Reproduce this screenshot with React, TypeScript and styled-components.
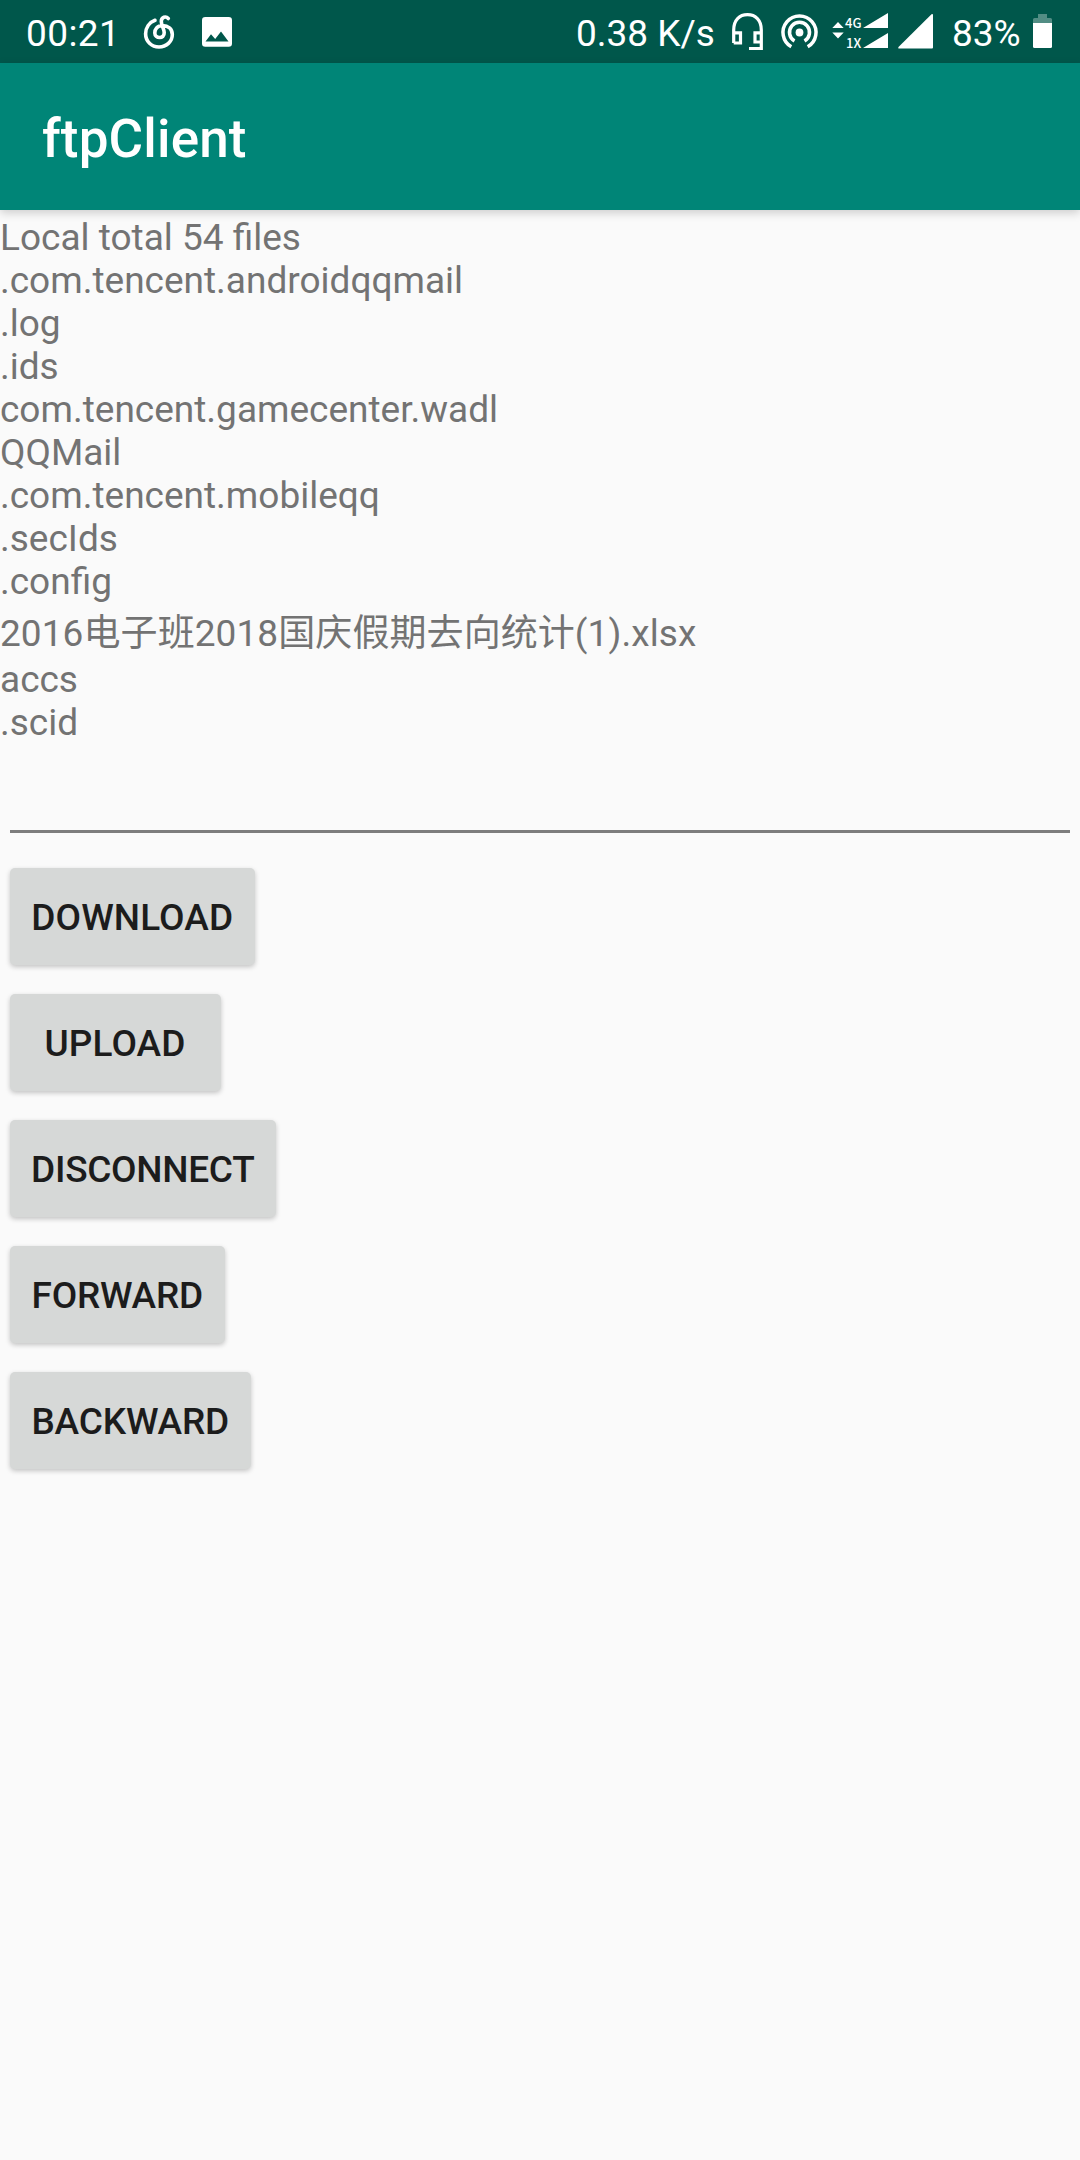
import React from 'react';
import styled, { createGlobalStyle } from 'styled-components';

const Global = createGlobalStyle`
  * { box-sizing: border-box; }
  body { margin: 0; background: #fafafa; font-family: Roboto, "Noto Sans CJK SC", sans-serif; }
`;

const Screen = styled.main`
  width: 1080px;
  min-height: 2160px;
  display: flex;
  flex-direction: column;
  background: #fafafa;
`;

const StatusBar = styled.header`
  height: 63px;
  display: flex;
  justify-content: space-between;
  padding: 0 28px 0 26px;
  background: #00574b;
  color: #fff;
`;

const StatusGroup = styled.div`
  display: flex;
  align-items: flex-start;
`;

const StatusText = styled.span<{ $width: number; $gap?: number; $spacing?: number }>`
  flex: none;
  width: ${(p) => p.$width}px;
  margin-left: ${(p) => p.$gap ?? 0}px;
  padding-top: 12px;
  font-size: 37px;
  line-height: 43px;
  letter-spacing: ${(p) => p.$spacing ?? 0}px;
  white-space: nowrap;
`;

const Glyph = styled.svg<{ $gap: number }>`
  display: block;
  flex: none;
  height: 63px;
  margin-left: ${(p) => p.$gap}px;
  fill: #fff;
  overflow: visible;
`;

const AppBar = styled.div`
  height: 147px;
  display: flex;
  align-items: center;
  padding: 5px 42px 0;
  background: #008577;
  box-shadow: 0 3px 9px rgba(0, 0, 0, 0.18);
  z-index: 1;
`;

const Title = styled.h1`
  margin: 0;
  color: #fff;
  font-size: 53px;
  line-height: 62px;
  font-weight: 500;
  letter-spacing: 0.15px;
`;

const FileList = styled.div`
  padding-top: 6px;
  height: 567px;
  color: #737373;
  font-size: 37px;
`;

const FileLine = styled.div<{ $cjk?: boolean }>`
  height: ${(p) => (p.$cjk ? 55 : 43)}px;
  padding-top: ${(p) => (p.$cjk ? 9 : 0)}px;
  line-height: 43px;
  letter-spacing: ${(p) => (p.$cjk ? '0.08px' : 'normal')};
  white-space: nowrap;
`;

const Field = styled.div`
  height: 56px;
  margin: 0 10px;
  border-bottom: 3px solid #7d7d7d;
`;

const Actions = styled.div`
  display: flex;
  flex-direction: column;
  align-items: flex-start;
  gap: 29px;
  padding: 35px 9.5px 0;
`;

const Action = styled.button<{ $width: number; $spacing: number }>`
  width: ${(p) => p.$width}px;
  height: 97px;
  padding: 2px 0 0;
  border: 0;
  border-radius: 5px;
  background: #d6d8d7;
  color: #1c1c1c;
  font: 500 37px/43px Roboto, sans-serif;
  letter-spacing: ${(p) => p.$spacing}px;
  white-space: nowrap;
  box-shadow: 0 2px 5px rgba(0, 0, 0, 0.22);
`;

const files = [
  'Local total 54 files',
  '.com.tencent.androidqqmail',
  '.log',
  '.ids',
  'com.tencent.gamecenter.wadl',
  'QQMail',
  '.com.tencent.mobileqq',
  '.secIds',
  '.config',
  '2016电子班2018国庆假期去向统计(1).xlsx',
  'accs',
  '.scid',
];

const actions = [
  { label: 'DOWNLOAD', width: 245.5, spacing: 0.1 },
  { label: 'UPLOAD', width: 211, spacing: 0.1 },
  { label: 'DISCONNECT', width: 266.5, spacing: -0.3 },
  { label: 'FORWARD', width: 215.5, spacing: -0.2 },
  { label: 'BACKWARD', width: 241.5, spacing: -0.15 },
];

const MusicIcon = () => (
  <Glyph $gap={28} width={30} viewBox="144 0 30 63">
    <path
      d="M155 20.300C149 22.500 145.600 28 145.600 33.800C145.600 41.500 151.500 47 159 47S172.300 41.500 172.300 34.500C172.300 28.500 168 25.600 162.500 25.600C157 25.600 154.800 29.500 154.800 33C154.800 38.800 164.500 39.500 164.200 32.500C164 29 161.300 25 161.300 21.500C161.300 17 165.800 15.800 168.300 18.500"
      fill="none" stroke="#fff" strokeWidth="3.600" strokeLinecap="round"
    />
  </Glyph>
);

const ImageIcon = () => (
  <Glyph $gap={28} width={30} viewBox="202 0 30 63">
    <path fillRule="evenodd" d="M205.300 17h23.400a3.300 3.300 0 0 1 3.300 3.300v23.200a3.300 3.300 0 0 1-3.300 3.300h-23.400a3.300 3.300 0 0 1-3.300-3.300V20.300a3.300 3.300 0 0 1 3.300-3.300ZM205.500 41.500H228.500L221 31.500L215.200 39L211 34.200Z" />
  </Glyph>
);

const HeadsetIcon = () => (
  <Glyph $gap={18} width={31} viewBox="732 0 31 63">
    <path d="M733.700 43V30C733.700 20 739.500 14.700 747.500 14.700S761.300 20 761.300 30V48.500H749M733.700 32.800H740.500V43H733.700M761.300 32.800H755V42H761.300" fill="none" stroke="#fff" strokeWidth="3.200" />
  </Glyph>
);

const HotspotIcon = () => (
  <Glyph $gap={19} width={36} viewBox="782 0 36 63">
    <circle cx="799.500" cy="32.500" r="3.900" />
    <path d="M794.500 41A10 10 0 1 1 804.500 41M791.300 46.800A16.500 16.500 0 1 1 807.700 46.800" fill="none" stroke="#fff" strokeWidth="3.500" />
  </Glyph>
);

const DataIcon = () => (
  <Glyph $gap={14} width={56} viewBox="832 0 56 63">
    <path d="M832.300 28L838 22L843.700 28ZM832.300 32.500L838 38.500L843.700 32.500ZM863 28L888 13V28ZM863 48L888 33V48Z" />
    <text x="845" y="28" fontSize="13" fontWeight="500" fontFamily="'Noto Sans CJK SC', sans-serif">4G</text>
    <text x="846" y="48" fontSize="13" fontWeight="500" fontFamily="'Noto Sans CJK SC', sans-serif">1X</text>
  </Glyph>
);

const SignalIcon = () => (
  <Glyph $gap={10} width={35} viewBox="898 0 35 63">
    <path d="M899 48.500Q897.500 48.500 898.500 47L931.500 14.300Q933 13.500 933 15V47.500Q933 48.500 932 48.500Z" />
  </Glyph>
);

const BatteryIcon = () => (
  <Glyph $gap={11} width={19} viewBox="1033 0 19 63">
    <path d="M1033 23V19.500Q1033 18 1034.500 18H1038V14H1047V18H1050.500Q1052 18 1052 19.500V23Z" opacity=".32" />
    <path d="M1033 23H1052V46.500Q1052 48 1050.500 48H1034.500Q1033 48 1033 46.500Z" />
  </Glyph>
);

export default function App() {
  return (
    <Screen>
      <Global />
      <StatusBar>
        <StatusGroup>
          <StatusText $width={90} $spacing={0.4}>00:21</StatusText>
          <MusicIcon />
          <ImageIcon />
        </StatusGroup>
        <StatusGroup>
          <StatusText $width={138}>0.38 K/s</StatusText>
          <HeadsetIcon />
          <HotspotIcon />
          <DataIcon />
          <SignalIcon />
          <StatusText $gap={19} $width={70}>83%</StatusText>
          <BatteryIcon />
        </StatusGroup>
      </StatusBar>
      <AppBar>
        <Title>ftpClient</Title>
      </AppBar>
      <FileList>
        {files.map((name) => (
          <FileLine key={name} $cjk={/[\u4e00-\u9fff]/.test(name)}>{name}</FileLine>
        ))}
      </FileList>
      <Field />
      <Actions>
        {actions.map(({ label, width, spacing }) => (
          <Action key={label} $width={width} $spacing={spacing}>{label}</Action>
        ))}
      </Actions>
    </Screen>
  );
}
